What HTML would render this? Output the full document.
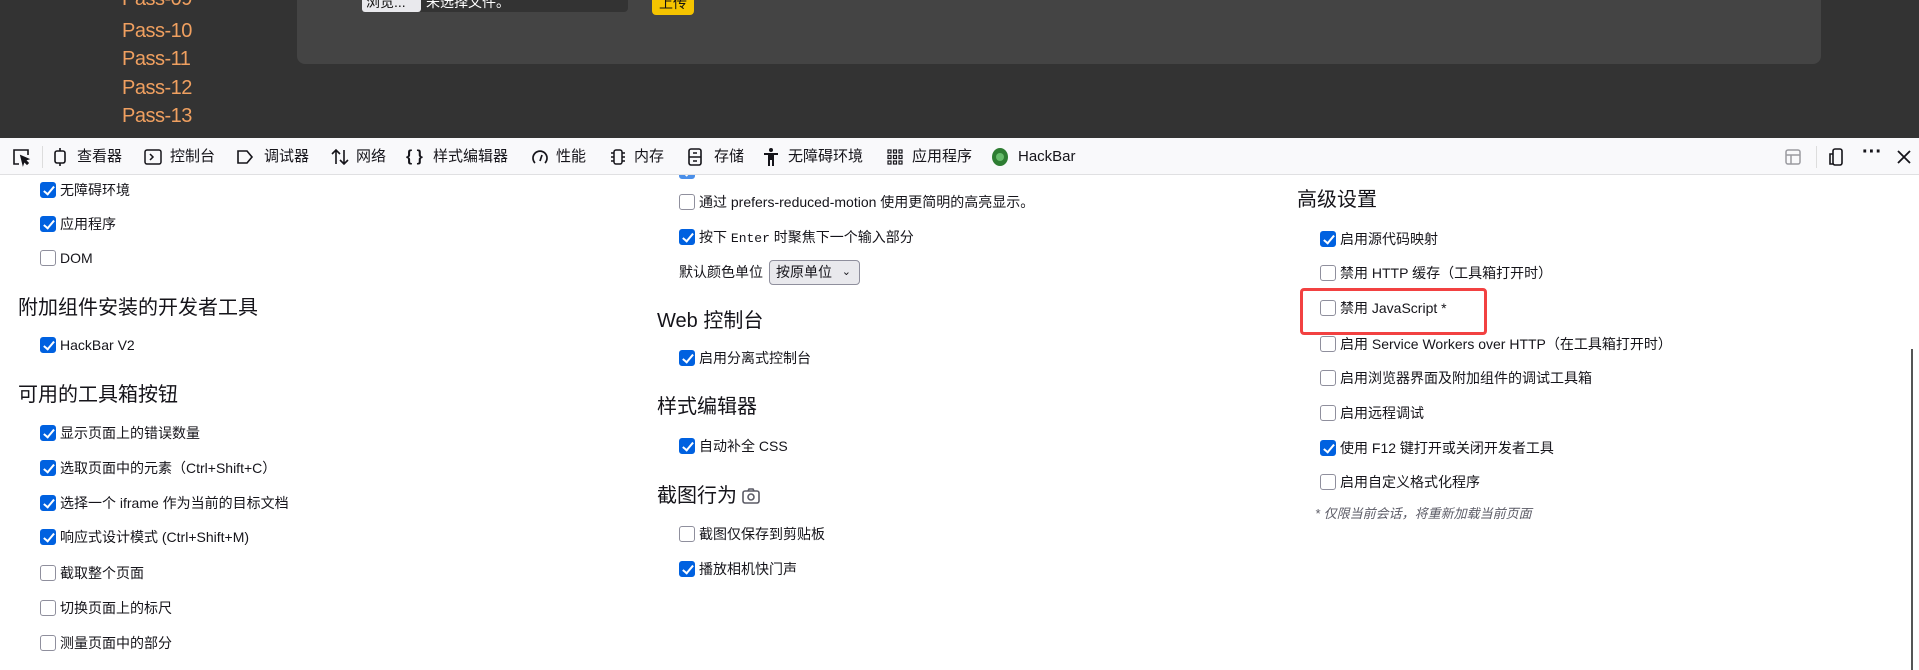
<!DOCTYPE html>
<html><head><meta charset="utf-8"><style>
*{margin:0;padding:0;box-sizing:border-box}
body{width:1919px;height:670px;overflow:hidden;background:#fff;font-family:"Liberation Sans","Noto Sans CJK SC",sans-serif;color:#15141a;position:relative}
.top{position:absolute;left:0;top:0;width:1919px;height:138px;background:#333}
.pass{position:absolute;left:122px;color:#f0a060;font-size:20px;line-height:24px;letter-spacing:-0.5px}
.panel{position:absolute;left:297px;top:-20px;width:1524px;height:84px;background:#444;border-radius:8px}
.tb{position:absolute;left:0;top:138px;width:1919px;height:37px;background:#f9f9fb;border-bottom:1px solid #e0e0e2;z-index:5}
.ti{position:absolute;top:0;height:37px;line-height:37px;font-size:15px;color:#15141a}
.ic{position:absolute;top:9px}
.r{position:absolute;height:20px;line-height:20px;font-size:14px;white-space:nowrap}
.cb{position:absolute;width:16px;height:16px;border-radius:3px;border:1px solid #8f8f9d;background:#fff}
.cb.on{background:#0061e0;border-color:#0061e0}
.cb.on::after{content:"";position:absolute;left:5px;top:1px;width:4px;height:9px;border:solid #fff;border-width:0 2px 2px 0;transform:rotate(40deg)}
.h{position:absolute;font-size:20px;line-height:24px;white-space:nowrap;color:#15141a}
</style></head><body>
<div class="top"></div>
<div class="pass" style="top:-13px">Pass-09</div>
<div class="pass" style="top:19px">Pass-10</div>
<div class="pass" style="top:47px">Pass-11</div>
<div class="pass" style="top:76px">Pass-12</div>
<div class="pass" style="top:104px">Pass-13</div>
<div class="panel"></div>
<div style="position:absolute;left:362px;top:-6px;width:266px;height:18px;background:#333;border-radius:4px"></div>
<div style="position:absolute;left:362px;top:-6px;width:59px;height:18px;background:#e9e9ed;border-radius:3px;font-size:14px;line-height:16px;color:#111;padding-left:4px;overflow:hidden">浏览...</div>
<div style="position:absolute;left:426px;top:-6px;font-size:14px;line-height:16px;color:#fff">未选择文件。</div>
<div style="position:absolute;left:652px;top:-6px;width:42px;height:21px;background:#f5c400;border-radius:4px;font-size:14px;line-height:18px;text-align:center;color:#111;overflow:hidden">上传</div>

<div class="tb">
<svg class="ic" style="left:11px" width="20" height="20" viewBox="0 0 20 20" fill="none" stroke="#15141a" stroke-width="1.6"><path d="M8 17H3V3h14v5"/><path d="M10 9l7 3-3 1 3 3-1 1-3-3-1 3z" fill="#15141a"/></svg>
<div style="position:absolute;left:42px;top:8px;width:1px;height:22px;background:#ddd"></div>
<svg class="ic" style="left:51px" width="18" height="20" viewBox="0 0 18 20" fill="none" stroke="#15141a" stroke-width="1.6"><rect x="4" y="4" width="10" height="12" rx="2"/><path d="M9 1v3M9 16v3"/></svg>
<div class="ti" style="left:77px">查看器</div>
<svg class="ic" style="left:143px" width="20" height="20" viewBox="0 0 20 20" fill="none" stroke="#15141a" stroke-width="1.5"><rect x="2" y="3" width="16" height="14" rx="2"/><path d="M7 7l3 3-3 3"/></svg>
<div class="ti" style="left:170px">控制台</div>
<svg class="ic" style="left:235px" width="20" height="20" viewBox="0 0 20 20" fill="none" stroke="#15141a" stroke-width="1.6"><path d="M3 4h9l5 6-5 6H3z"/></svg>
<div class="ti" style="left:264px">调试器</div>
<svg class="ic" style="left:330px" width="20" height="20" viewBox="0 0 20 20" fill="none" stroke="#15141a" stroke-width="1.6"><path d="M6 17V3M2 7l4-4 4 4M14 3v14M10 13l4 4 4-4"/></svg>
<div class="ti" style="left:356px">网络</div>
<div class="ti" style="left:406px;font-weight:bold;font-size:16px">{ }</div>
<div class="ti" style="left:433px">样式编辑器</div>
<svg class="ic" style="left:530px" width="20" height="20" viewBox="0 0 20 20" fill="none" stroke="#15141a" stroke-width="1.7"><path d="M5 16A7 7 0 1 1 15 16"/><path d="M10 14l2-6"/></svg>
<div class="ti" style="left:556px">性能</div>
<svg class="ic" style="left:608px" width="20" height="20" viewBox="0 0 20 20" fill="none" stroke="#15141a" stroke-width="1.5"><rect x="6" y="3" width="8" height="14" rx="2"/><path d="M3 6h3M3 10h3M3 14h3M14 6h3M14 10h3M14 14h3"/></svg>
<div class="ti" style="left:634px">内存</div>
<svg class="ic" style="left:686px" width="18" height="20" viewBox="0 0 18 20" fill="none" stroke="#15141a" stroke-width="1.6"><rect x="3" y="2" width="12" height="16" rx="2"/><path d="M3 10h12M7 6h4M7 14h4"/></svg>
<div class="ti" style="left:714px">存储</div>
<svg class="ic" style="left:762px" width="18" height="20" viewBox="0 0 18 20" fill="#15141a"><circle cx="9" cy="3" r="2"/><path d="M2 6h14v2h-4v11h-2v-6H8v6H6V8H2z"/></svg>
<div class="ti" style="left:788px">无障碍环境</div>
<svg class="ic" style="left:886px" width="18" height="20" viewBox="0 0 18 20" fill="none" stroke="#15141a" stroke-width="1.2"><rect x="2" y="3" width="3" height="3"/><rect x="7.5" y="3" width="3" height="3"/><rect x="13" y="3" width="3" height="3"/><rect x="2" y="8.5" width="3" height="3"/><rect x="7.5" y="8.5" width="3" height="3"/><rect x="13" y="8.5" width="3" height="3"/><rect x="2" y="14" width="3" height="3"/><rect x="7.5" y="14" width="3" height="3"/><rect x="13" y="14" width="3" height="3"/></svg>
<div class="ti" style="left:912px">应用程序</div>
<svg class="ic" style="left:990px" width="20" height="20" viewBox="0 0 20 20"><ellipse cx="10" cy="10" rx="8" ry="9" fill="#2e7d32"/><circle cx="10" cy="10" r="4" fill="#66bb6a"/></svg>
<div class="ti" style="left:1018px">HackBar</div>
<svg class="ic" style="left:1783px" width="20" height="20" viewBox="0 0 20 20" fill="none" stroke="#9a9aa0" stroke-width="1.5"><rect x="3" y="3" width="14" height="14" rx="2"/><path d="M3 8h14M8 8v9"/></svg>
<div style="position:absolute;left:1816px;top:8px;width:1px;height:22px;background:#ddd"></div>
<svg class="ic" style="left:1827px" width="20" height="20" viewBox="0 0 20 20" fill="none" stroke="#15141a" stroke-width="1.6"><rect x="6" y="2" width="9" height="16" rx="2"/><path d="M6 7H3v10h3"/></svg>
<div class="ti" style="left:1862px;font-size:20px;font-weight:bold;top:-4px">···</div>
<svg class="ic" style="left:1895px" width="18" height="20" viewBox="0 0 18 20" stroke="#15141a" stroke-width="1.8"><path d="M3 4l12 12M15 4L3 16"/></svg>
</div>

<!-- column 1 -->
<div class="cb on" style="left:40px;top:182px"></div><div class="r" style="left:60px;top:180px">无障碍环境</div>
<div class="cb on" style="left:40px;top:216px"></div><div class="r" style="left:60px;top:214px">应用程序</div>
<div class="cb" style="left:40px;top:250px"></div><div class="r" style="left:60px;top:248px">DOM</div>
<div class="h" style="left:18px;top:296px">附加组件安装的开发者工具</div>
<div class="cb on" style="left:40px;top:337px"></div><div class="r" style="left:60px;top:335px">HackBar V2</div>
<div class="h" style="left:18px;top:383px">可用的工具箱按钮</div>
<div class="cb on" style="left:40px;top:425px"></div><div class="r" style="left:60px;top:423px">显示页面上的错误数量</div>
<div class="cb on" style="left:40px;top:460px"></div><div class="r" style="left:60px;top:458px">选取页面中的元素（Ctrl+Shift+C）</div>
<div class="cb on" style="left:40px;top:495px"></div><div class="r" style="left:60px;top:493px">选择一个 iframe 作为当前的目标文档</div>
<div class="cb on" style="left:40px;top:529px"></div><div class="r" style="left:60px;top:527px">响应式设计模式 (Ctrl+Shift+M)</div>
<div class="cb" style="left:40px;top:565px"></div><div class="r" style="left:60px;top:563px">截取整个页面</div>
<div class="cb" style="left:40px;top:600px"></div><div class="r" style="left:60px;top:598px">切换页面上的标尺</div>
<div class="cb" style="left:40px;top:635px"></div><div class="r" style="left:60px;top:633px">测量页面中的部分</div>

<!-- column 2 -->
<div class="cb on" style="left:679px;top:163px;opacity:.7;z-index:1"></div>
<div class="cb" style="left:679px;top:194px"></div><div class="r" style="left:699px;top:192px">通过 prefers-reduced-motion 使用更简明的高亮显示。</div>
<div class="cb on" style="left:679px;top:229px"></div><div class="r" style="left:699px;top:227px">按下 <span style="font-family:'Liberation Mono',monospace;font-size:13px">Enter</span> 时聚焦下一个输入部分</div>
<div class="r" style="left:679px;top:262px">默认颜色单位</div>
<div style="position:absolute;left:769px;top:260px;width:91px;height:25px;border:1px solid #8f8f9d;border-radius:4px;background:#e9e9ed;font-size:14px;line-height:23px;padding-left:6px">按原单位 <span style="position:absolute;right:8px;font-size:11px">⌄</span></div>
<div class="h" style="left:657px;top:309px">Web 控制台</div>
<div class="cb on" style="left:679px;top:350px"></div><div class="r" style="left:699px;top:348px">启用分离式控制台</div>
<div class="h" style="left:657px;top:395px">样式编辑器</div>
<div class="cb on" style="left:679px;top:438px"></div><div class="r" style="left:699px;top:436px">自动补全 CSS</div>
<div class="h" style="left:657px;top:484px">截图行为</div>
<svg style="position:absolute;left:741px;top:487px" width="20" height="18" viewBox="0 0 20 18" fill="none" stroke="#5b5b66" stroke-width="1.6"><rect x="2" y="4" width="16" height="12" rx="2"/><circle cx="10" cy="10" r="3"/><path d="M7 4l1-2h4l1 2"/></svg>
<div class="cb" style="left:679px;top:526px"></div><div class="r" style="left:699px;top:524px">截图仅保存到剪贴板</div>
<div class="cb on" style="left:679px;top:561px"></div><div class="r" style="left:699px;top:559px">播放相机快门声</div>

<!-- column 3 -->
<div class="h" style="left:1297px;top:188px">高级设置</div>
<div class="cb on" style="left:1320px;top:231px"></div><div class="r" style="left:1340px;top:229px">启用源代码映射</div>
<div class="cb" style="left:1320px;top:265px"></div><div class="r" style="left:1340px;top:263px">禁用 HTTP 缓存（工具箱打开时）</div>
<div class="cb" style="left:1320px;top:300px"></div><div class="r" style="left:1340px;top:298px">禁用 JavaScript *</div>
<div style="position:absolute;left:1300px;top:288px;width:187px;height:47px;border:3px solid #f24141;border-radius:4px"></div>
<div class="cb" style="left:1320px;top:336px"></div><div class="r" style="left:1340px;top:334px">启用 Service Workers over HTTP（在工具箱打开时）</div>
<div class="cb" style="left:1320px;top:370px"></div><div class="r" style="left:1340px;top:368px">启用浏览器界面及附加组件的调试工具箱</div>
<div class="cb" style="left:1320px;top:405px"></div><div class="r" style="left:1340px;top:403px">启用远程调试</div>
<div class="cb on" style="left:1320px;top:440px"></div><div class="r" style="left:1340px;top:438px">使用 F12 键打开或关闭开发者工具</div>
<div class="cb" style="left:1320px;top:474px"></div><div class="r" style="left:1340px;top:472px">启用自定义格式化程序</div>
<div class="r" style="left:1315px;top:504px;font-size:13px;font-style:italic;color:#5b5b66">* 仅限当前会话，将重新加载当前页面</div>
<div style="position:absolute;left:1911px;top:349px;width:2px;height:321px;background:#555"></div>
</body></html>
